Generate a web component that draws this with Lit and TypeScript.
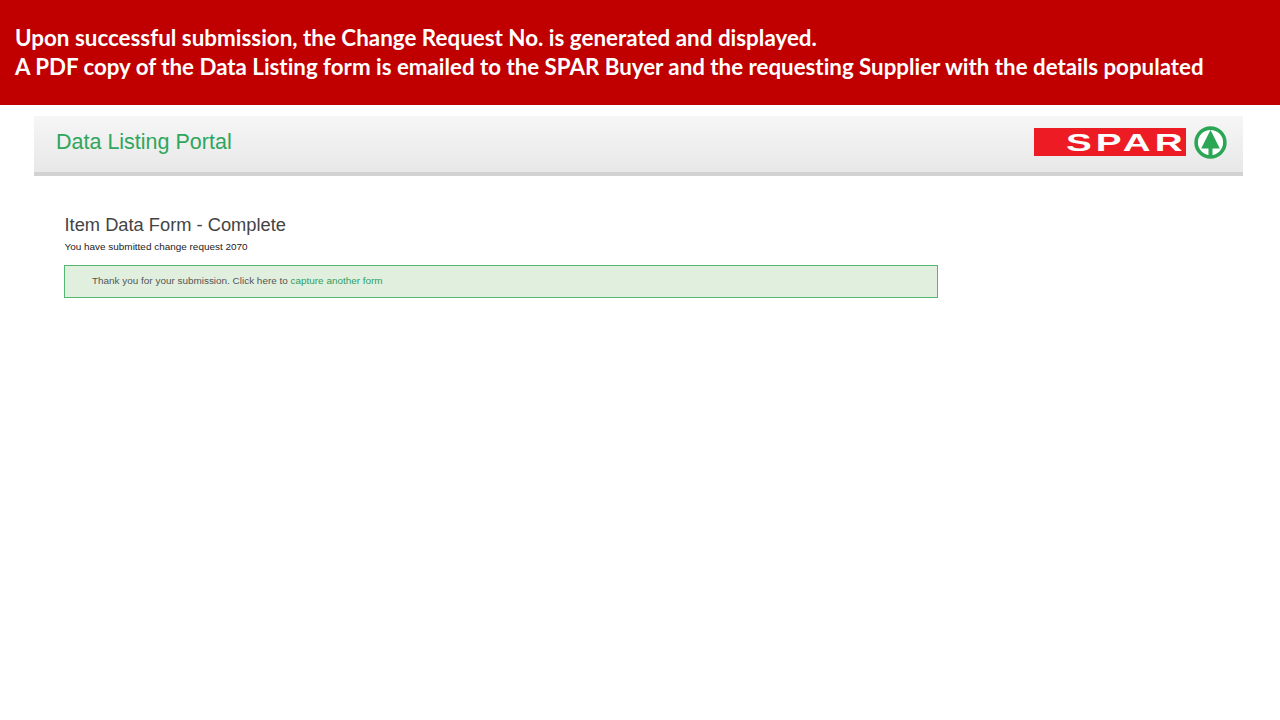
import { LitElement, html, css } from "lit";
import { customElement } from "lit/decorators.js";

@customElement("app-root")
export class AppRoot extends LitElement {
  static styles = css`
    :host { display: block; width: 1280px; height: 720px; background: #fff; overflow: hidden; font-family: "Liberation Sans", Arial, sans-serif; }
    .banner { height: 105px; box-sizing: border-box; background: #c00000; padding: 23px 0 0 15px; color: #fff; font-family: Lato, "Open Sans", sans-serif; font-weight: 700; font-size: 22.4px; line-height: 29px; white-space: nowrap; font-variant-ligatures: none; }
    .banner .second { font-size: 22.31px; }
    .page { padding: 11px 37px 0 34px; }
    .bar { height: 60px; box-sizing: border-box; border-bottom: 4px solid #d2d2d2; background: linear-gradient(#f6f6f6, #e8e8e8); display: flex; align-items: center; justify-content: space-between; padding: 0 16px 0 22px; }
    .title { color: #2ea65c; font-size: 21.5px; line-height: 26px; margin-top: -5px; }
    .logo { display: flex; align-items: center; gap: 8px; margin-top: -4px; }
    .logo svg { display: block; }
    .wordmark { font: 700 23px "Liberation Sans", Arial, sans-serif; fill: #fff; }
    .content { padding: 38px 0 0 30.5px; }
    h1 { margin: 0; font-weight: 400; font-size: 18.3px; line-height: 22px; color: #444; }
    .sub { margin-top: 5px; font-size: 9.95px; line-height: 12px; color: #222; }
    .alert { margin: 12px 0 0 -0.5px; width: 874px; height: 33px; box-sizing: border-box; border: 1px solid #55b872; background: #e1efdf; padding: 9px 0 0 27px; font-size: 9.93px; line-height: 12px; color: #555; }
    .alert a { color: #2f9e5c; text-decoration: none; }
  `;

  render() {
    return html`
      <div class="banner">
        <div>Upon successful submission, the Change Request No. is generated and displayed.</div>
        <div class="second">A PDF copy of the Data Listing form is emailed to the SPAR Buyer and the requesting Supplier with the details populated</div>
      </div>
      <div class="page">
        <div class="bar">
          <div class="title">Data Listing Portal</div>
          <div class="logo">
            <svg width="152" height="28" viewBox="0 0 152 28">
              <rect width="152" height="28" fill="#ed1c24"/>
              <text class="wordmark" transform="translate(32 22.5) scale(1.68 1)" textLength="69.5" lengthAdjust="spacing">SPAR</text>
            </svg>
            <svg width="33" height="33" viewBox="0 0 33 33">
              <circle cx="16.5" cy="16.5" r="14.4" fill="#fff" stroke="#2aa655" stroke-width="3.6"/>
              <path d="M16.5 4 L25.8 22.5 H18.5 V30 H14.5 V22.5 H7.2 Z" fill="#2aa655"/>
            </svg>
          </div>
        </div>
        <div class="content">
          <h1>Item Data Form - Complete</h1>
          <div class="sub">You have submitted change request 2070</div>
          <div class="alert">Thank you for your submission. Click here to <a href="#">capture another form</a></div>
        </div>
      </div>
    `;
  }
}
